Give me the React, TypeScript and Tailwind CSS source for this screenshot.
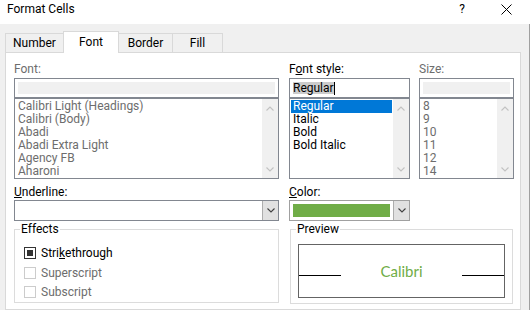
import React from "react"

const fontItems = [
  "Calibri Light (Headings)",
  "Calibri (Body)",
  "Abadi",
  "Abadi Extra Light",
  "Agency FB",
  "Aharoni",
]
const styleItems = ["Regular", "Italic", "Bold", "Bold Italic"]
const sizeItems = ["8", "9", "10", "11", "12", "14"]

function Chevron({ dir, color }: { dir: "up" | "down"; color: string }) {
  return (
    <svg width="8" height="5" viewBox="0 0 8 5" fill="none">
      <path
        d={dir === "up" ? "M0.5 4.5L4 1L7.5 4.5" : "M0.5 0.5L4 4L7.5 0.5"}
        stroke={color}
        strokeWidth="1.1"
      />
    </svg>
  )
}

function ScrollBar() {
  return (
    <div className="w-[16px] bg-[#f0f0f0] flex flex-col justify-between">
      <div className="h-[17px] flex items-center justify-center pt-[2px]">
        <Chevron dir="up" color="#c2c2c2" />
      </div>
      <div className="h-[17px] flex items-center justify-center pb-[1px]">
        <Chevron dir="down" color="#c2c2c2" />
      </div>
    </div>
  )
}

function ListBox({ items, selected, muted }: { items: string[]; selected?: string; muted?: boolean }) {
  return (
    <div className="flex h-[81px] border border-[#828790] bg-white">
      <div className="flex-1 pl-[1px] pt-[1px] overflow-hidden">
        {items.map((it) => (
          <div
            key={it}
            className={`h-[13px] leading-[13px] pl-[2px] mr-[1px] whitespace-nowrap ${
              it === selected ? "bg-[#0078d7] text-white" : muted ? "text-[#6d6d6d]" : "text-black"
            }`}
          >
            {it}
          </div>
        ))}
      </div>
      <ScrollBar />
    </div>
  )
}

function EmptyInput() {
  return (
    <div className="h-[20px] border border-[#828790] bg-white p-[3px]">
      <div className="h-full bg-[#f0f0f0]" />
    </div>
  )
}

function DropButton() {
  return (
    <div className="w-[16px] h-full border-l border-[#adadad] bg-[#e1e1e1] flex items-center justify-center">
      <Chevron dir="down" color="#404040" />
    </div>
  )
}

function CheckRow({ checked, disabled, children }: { checked?: boolean; disabled?: boolean; children: React.ReactNode }) {
  return (
    <div className="flex items-center gap-[5px] pl-[9px]">
      <div
        className={`w-[12px] h-[12px] border bg-white p-[2px] ${
          disabled ? "border-[#cccccc]" : "border-[#333333]"
        }`}
      >
        {checked && <div className="h-full w-full bg-[#333333]" />}
      </div>
      <span className={disabled ? "text-[#6d6d6d]" : "text-black"}>{children}</span>
    </div>
  )
}

export default function App() {
  return (
    <div className="w-[530px] h-[310px] bg-[#f0f0f0] overflow-hidden flex flex-col text-[12px] text-black font-[Roboto,'Liberation_Sans',sans-serif]">
      {/* Title bar */}
      <div className="h-[24px] shrink-0 bg-white flex items-start pt-[1px] pl-[7px] pr-[18px] leading-[16px]">
        <span>Format Cells</span>
        <span className="ml-auto mt-[0px]">?</span>
        <svg className="ml-[36px] mt-[3px]" width="11" height="11" viewBox="0 0 11 11" fill="none">
          <path d="M0.5 0.5L10.5 10.5M10.5 0.5L0.5 10.5" stroke="#000" strokeWidth="1" />
        </svg>
      </div>

      <div className="flex-1 flex flex-col pl-[5px] pr-[8px] pt-[7px] border-r border-[#a0a0a0]">
        {/* Tabs */}
        <div className="flex items-end h-[21px] shrink-0">
          <div className="w-[58px] h-[19px] border-t border-l border-[#d9d9d9] bg-[#f0f0f0] flex items-center justify-center">
            Number
          </div>
          <div className="w-[56px] h-[22px] -mb-px relative z-10 border-t border-l border-r border-[#d9d9d9] bg-white flex items-center justify-center pb-[2px]">
            Font
          </div>
          <div className="w-[53px] h-[19px] border-t border-[#d9d9d9] bg-[#f0f0f0] flex items-center justify-center">
            Border
          </div>
          <div className="w-[51px] h-[19px] border-t border-l border-r border-[#d9d9d9] bg-[#f0f0f0] flex items-center justify-center">
            Fill
          </div>
        </div>

        {/* Panel */}
        <div className="flex-1 bg-white border border-[#d9d9d9] pl-[8px] pt-[8px] overflow-hidden">
          <div className="flex">
            <div className="w-[265px]">
              <div className="h-[17px] leading-[17px] text-[#6d6d6d]">Font:</div>
              <EmptyInput />
              <ListBox items={fontItems} muted />
            </div>
            <div className="w-[121px] ml-[10px]">
              <div className="h-[17px] leading-[17px]">
                F<span className="underline">o</span>nt style:
              </div>
              <div className="h-[20px] border border-[#828790] bg-white pl-[3px] flex items-center">
                <span className="bg-[#cccccc] leading-[12px] h-[12px]">Regular</span>
                <span className="w-px h-[13px] bg-black" />
              </div>
              <ListBox items={styleItems} selected="Regular" />
            </div>
            <div className="w-[95px] ml-[9px]">
              <div className="h-[17px] leading-[17px] text-[#6d6d6d]">Size:</div>
              <EmptyInput />
              <ListBox items={sizeItems} muted />
            </div>
          </div>

          <div className="flex mt-[5px]">
            <div className="w-[265px]">
              <div className="h-[16px] leading-[16px]">
                <span className="underline">U</span>nderline:
              </div>
              <div className="h-[21px] border border-[#828790] bg-white flex justify-end">
                <DropButton />
              </div>
            </div>
            <div className="w-[121px] ml-[10px]">
              <div className="h-[16px] leading-[16px]">
                <span className="underline">C</span>olor:
              </div>
              <div className="h-[21px] border border-[#a0a0a0] bg-white flex">
                <div className="flex-1 pl-[3px] pr-[3px] py-[3px]">
                  <div className="h-full bg-[#70ad47]" />
                </div>
                <DropButton />
              </div>
            </div>
          </div>

          <div className="flex">
            <fieldset className="w-[265px] h-[82px] border border-[#dcdcdc]">
              <legend className="ml-[5px] px-[1px] leading-[16px]">Effects</legend>
              <div className="pt-[6px] flex flex-col">
                <div className="h-[20px] flex items-center">
                  <CheckRow checked>
                    Stri<span className="underline">k</span>ethrough
                  </CheckRow>
                </div>
                <div className="h-[19px] flex items-center">
                  <CheckRow disabled>Superscript</CheckRow>
                </div>
                <div className="h-[19px] flex items-center">
                  <CheckRow disabled>Subscript</CheckRow>
                </div>
              </div>
            </fieldset>
            <fieldset className="w-[223px] h-[83px] ml-[11px] border border-[#dcdcdc]">
              <legend className="ml-[5px] px-[1px] leading-[16px]">Preview</legend>
              <div className="mt-[7px] mx-[7px] h-[54px] border border-[#646464] flex">
                <div className="w-[42px] h-px bg-black mt-[30px]" />
                <div className="flex-1 text-center pt-[17px] leading-[18px] text-[15px] text-[#70ad47] font-['Lato',sans-serif]">
                  Calibri
                </div>
                <div className="w-[42px] h-px bg-black mt-[30px]" />
              </div>
            </fieldset>
          </div>
        </div>
      </div>
    </div>
  )
}
